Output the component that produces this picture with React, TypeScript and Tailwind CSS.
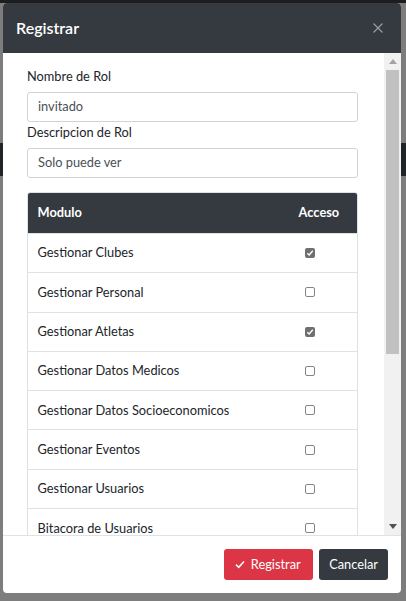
import React from "react";

const rows: { name: string; checked: boolean }[] = [
  { name: "Gestionar Clubes", checked: true },
  { name: "Gestionar Personal", checked: false },
  { name: "Gestionar Atletas", checked: true },
  { name: "Gestionar Datos Medicos", checked: false },
  { name: "Gestionar Datos Socioeconomicos", checked: false },
  { name: "Gestionar Eventos", checked: false },
  { name: "Gestionar Usuarios", checked: false },
  { name: "Bitacora de Usuarios", checked: false },
];

function Box({ checked }: { checked: boolean }) {
  return checked ? (
    <div className="w-[10px] h-[10px] rounded-[2px] bg-[#6f6f6f] flex items-center justify-center">
      <svg width="8" height="8" viewBox="0 0 8 8">
        <polyline points="1.3,4.2 3.2,6 6.8,1.8" fill="none" stroke="#fff" strokeWidth="1.4" />
      </svg>
    </div>
  ) : (
    <div className="w-[10px] h-[10px] rounded-[2px] border border-[#858585] bg-white" />
  );
}

export default function App() {
  return (
    <div
      className="relative w-[406px] h-[601px] bg-[#7d7d7d] overflow-hidden flex flex-col"
      style={{ fontFamily: '"Segoe UI", Lato, "Open Sans", sans-serif' }}
    >
      <div className="h-[3px] bg-[#1b1d1f]" />
      <div className="h-[140px]" />
      <div className="h-[33px] bg-[#202427]" />

      <div className="absolute left-[3px] top-[3px] w-[398px] h-[590px] rounded-[4px] overflow-hidden bg-white flex flex-col">
        {/* header */}
        <div className="h-[50px] shrink-0 bg-[#343a40] flex items-center justify-between pl-[13px] pr-[18px]">
          <div className="text-white text-[16px] font-semibold leading-[24px]">Registrar</div>
          <svg width="10" height="10" viewBox="0 0 10 10">
            <line x1="0.5" y1="0.5" x2="9.5" y2="9.5" stroke="#9aa0a6" strokeWidth="1.1" />
            <line x1="9.5" y1="0.5" x2="0.5" y2="9.5" stroke="#9aa0a6" strokeWidth="1.1" />
          </svg>
        </div>

        {/* body */}
        <div className="h-[482px] shrink-0 flex flex-row">
          <div className="flex-1 overflow-hidden pl-[24px] pr-[26px] pt-[14px] text-[12.8px] text-[#212529]">
            <div className="leading-[19.2px]">Nombre de Rol</div>
            <div className="mt-[5.5px] h-[30px] border border-[#ced4da] rounded-[3px] flex items-center px-[10px] text-[#495057]">
              invitado
            </div>
            <div className="mt-[1.5px] leading-[19.2px]">Descripcion de Rol</div>
            <div className="mt-[5.5px] h-[30px] border border-[#ced4da] rounded-[3px] flex items-center px-[10px] text-[#495057]">
              Solo puede ver
            </div>

            <div className="mt-[14px] border border-[#dee2e6] rounded-t-[3px] overflow-hidden">
              <div className="grid grid-cols-[1fr_68px] bg-[#343a40] text-white font-bold h-[40px] items-center">
                <div className="px-[9.6px]">Modulo</div>
                <div className="px-[9.6px]">Acceso</div>
              </div>
              {rows.map((r) => (
                <div
                  key={r.name}
                  className="grid grid-cols-[1fr_68px] border-t border-[#dee2e6] h-[39.3px] items-center"
                >
                  <div className="px-[9.6px] leading-[19.2px]">{r.name}</div>
                  <div className="pl-[16px] flex items-center">
                    <Box checked={r.checked} />
                  </div>
                </div>
              ))}
            </div>
          </div>

          {/* scrollbar */}
          <div className="w-[17px] shrink-0 bg-[#f1f1f1] flex flex-col">
            <div className="h-[17px] flex items-center justify-center">
              <svg width="8" height="5" viewBox="0 0 8 5">
                <polygon points="0,5 8,5 4,0" fill="#a3a3a3" />
              </svg>
            </div>
            <div className="mx-[2px] h-[284px] bg-[#c1c1c1]" />
            <div className="flex-1" />
            <div className="h-[17px] flex items-center justify-center">
              <svg width="8" height="5" viewBox="0 0 8 5">
                <polygon points="0,0 8,0 4,5" fill="#505050" />
              </svg>
            </div>
          </div>
        </div>

        {/* footer */}
        <div className="flex-1 border-t border-[#dee2e6] flex items-center justify-end gap-[6.5px] pr-[13px] text-[12.8px]">
          <div className="h-[31px] rounded-[3px] bg-[#dc3545] text-white flex items-center pl-[11px] pr-[12px] gap-[6px]">
            <svg width="10" height="9" viewBox="0 0 10 9">
              <polyline points="1,4.6 3.7,7.3 9,1.5" fill="none" stroke="#fff" strokeWidth="1.5" />
            </svg>
            <span>Registrar</span>
          </div>
          <div className="h-[31px] rounded-[3px] bg-[#343a40] text-white flex items-center px-[10px]">
            Cancelar
          </div>
        </div>
      </div>
    </div>
  );
}
